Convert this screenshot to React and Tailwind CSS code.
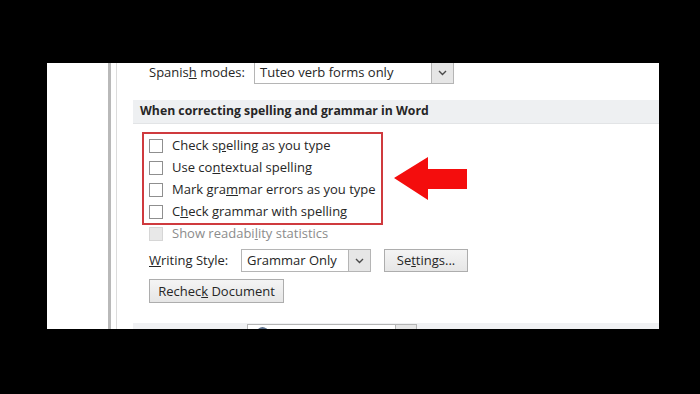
import React from "react";

const font = { fontFamily: "'Open Sans', 'Noto Sans', sans-serif" };

function Chevron() {
  return (
    <svg width="9" height="6" viewBox="0 0 9 6">
      <polyline points="1,1 4.5,4.5 8,1" fill="none" stroke="#4a4a4a" strokeWidth="1.4" />
    </svg>
  );
}

function Check({ label }) {
  return (
    <div className="flex items-center h-[22px]">
      <div className="w-[14px] h-[14px] shrink-0 border border-[#8f8f8f] bg-white" />
      <span className="ml-[9px] text-[#262626]">{label}</span>
    </div>
  );
}

export default function App() {
  return (
    <div className="w-[700px] h-[394px] bg-black pt-[63px] pl-[47px] overflow-hidden text-[13px]" style={font}>
      <div className="w-[612px] h-[266px] bg-white flex overflow-hidden">
        {/* left nav edge */}
        <div className="w-[61px] shrink-0" />
        <div className="w-[3px] shrink-0 bg-[#b9b9b9]" />
        <div className="w-[5px] shrink-0" />
        <div className="w-px shrink-0 bg-[#dcdcdc]" />

        <div className="flex-1 flex flex-col [&>*]:shrink-0">
          {/* Spanish modes */}
          <div className="flex items-center -mt-px h-[22px] pl-[32px] text-[#262626]">
            <span className="w-[105px]">
              Spanis<u>h</u> modes:
            </span>
            <div className="flex w-[200px] h-[22px] border border-[#b5b5b5] bg-white">
              <span className="flex-1 flex items-center pl-[5px]">Tuteo verb forms only</span>
              <div className="w-[22px] bg-[#e6e6e6] border-l border-[#b5b5b5] flex items-center justify-center">
                <Chevron />
              </div>
            </div>
          </div>

          {/* section header */}
          <div className="mt-[16px] ml-[16px] h-[24px] bg-[#eef0f2] border-b border-[#e2e4e6] flex items-center pl-[7px] font-bold text-[12.25px] text-[#262626]">
            When correcting spelling and grammar in Word
          </div>

          {/* red box + arrow */}
          <div className="mt-[8px] ml-[25px] flex items-center">
            <div className="w-[241px] h-[93px] border-2 border-[#cf3a3e] pl-[5px] pt-[1px]">
              <Check label={<>Check s<u>p</u>elling as you type</>} />
              <Check label={<>Use co<u>n</u>textual spelling</>} />
              <Check label={<>Mark gra<u>m</u>mar errors as you type</>} />
              <Check label={<>C<u>h</u>eck grammar with spelling</>} />
            </div>
            <svg className="ml-[11px]" width="74" height="44" viewBox="0 0 74 44">
              <polygon points="0,21 34,0 34,12 73,12 73,32 34,32 34,43" fill="#f40d0d" />
            </svg>
          </div>

          <div className="pl-[32px]">
            <div className="flex items-center h-[18px]">
              <div className="w-[14px] h-[14px] border border-[#d6d6d6] bg-[#e8e8e8]" />
              <span className="ml-[9px] text-[#8c8c8c]">
                Show readabi<u>l</u>ity statistics
              </span>
            </div>
          </div>

          {/* writing style */}
          <div className="mt-[6px] pl-[32px] flex items-center h-[23px] text-[#262626]">
            <span className="w-[92px]">
              <u>W</u>riting Style:
            </span>
            <div className="flex w-[130px] h-[23px] border border-[#b5b5b5] bg-white">
              <span className="flex-1 flex items-center pl-[5px]">Grammar Only</span>
              <div className="w-[22px] bg-[#e6e6e6] border-l border-[#b5b5b5] flex items-center justify-center">
                <Chevron />
              </div>
            </div>
            <button className="ml-[13px] w-[84px] h-[23px] border border-[#adadad] bg-gradient-to-b from-[#f4f4f4] to-[#e6e6e6] text-center leading-[21px]">
              Se<u>t</u>tings...
            </button>
          </div>

          <div className="mt-[7px] pl-[32px] text-[#262626]">
            <button className="w-[135px] h-[24px] border border-[#adadad] bg-gradient-to-b from-[#f4f4f4] to-[#e6e6e6] text-center leading-[22px]">
              Rechec<u>k</u> Document
            </button>
          </div>

          {/* next section, cut off */}
          <div className="mt-[20px] ml-[16px] h-[12px] bg-[#f0f1f3] pt-px pl-[114px]">
            <div className="flex w-[170px] h-[14px] border border-[#b5b5b5] bg-white">
              <div className="flex-1 pl-[9px] pt-[2px]">
                <div className="w-[11px] h-[9px] rounded-t-full border-2 border-[#5b6f8a] border-b-0" />
              </div>
              <div className="w-[21px] bg-[#e6e6e6] border-l border-[#b5b5b5]" />
            </div>
          </div>
        </div>
      </div>
    </div>
  );
}
